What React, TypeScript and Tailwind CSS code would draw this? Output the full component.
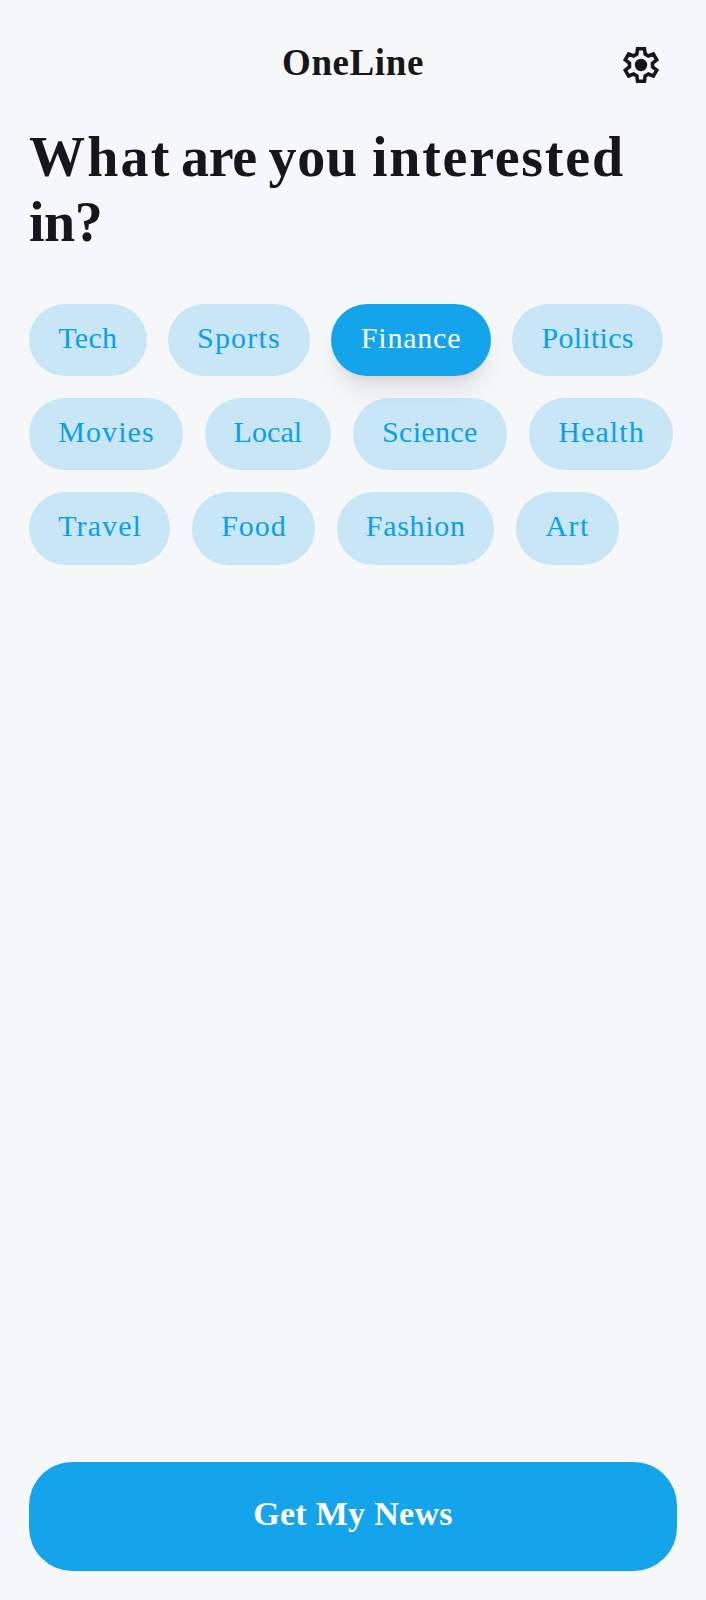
const topics = [
  [
    { name: "Tech", box: "w-[117.6px] tracking-[0.3px]" },
    { name: "Sports", box: "w-[141.4px] tracking-[1.2px]" },
    { name: "Finance", box: "w-[159.4px] tracking-[0.8px]", selected: true },
    { name: "Politics", box: "w-[150.4px] tracking-[0.3px]" },
  ],
  [
    { name: "Movies", box: "w-[154px] tracking-[1.05px] pl-px" },
    { name: "Local", box: "w-[126.4px] tracking-[0.1px]" },
    { name: "Science", box: "w-[154.1px] tracking-[0.3px]" },
    { name: "Health", box: "w-[144.9px] tracking-[1.1px] pl-px" },
  ],
  [
    { name: "Travel", box: "w-[141.2px] tracking-[1.1px] pl-px" },
    { name: "Food", box: "w-[123.1px] tracking-[0.9px] pl-px" },
    { name: "Fashion", box: "w-[157.2px] tracking-[0.7px] pl-px" },
    { name: "Art", box: "w-[103.2px] tracking-[1.5px] pl-px" },
  ],
];

// One tooth of the gear, repeated every 60 degrees.
const tooth = [
  [-4.2, -10.9],
  [-3.4, -16.2],
  [3.4, -16.2],
  [4.2, -10.9],
];

const gear = Array.from({ length: 6 }, (_, i) => {
  const a = (i * Math.PI) / 3;
  return tooth
    .map(([x, y]) => `${(x * Math.cos(a) - y * Math.sin(a)).toFixed(2)},${(x * Math.sin(a) + y * Math.cos(a)).toFixed(2)}`)
    .join(" ");
}).join(" ");

function GearIcon() {
  return (
    <svg viewBox="-20 -20 40 40" className="size-10" aria-hidden="true">
      <polygon points={gear} fill="none" stroke="currentColor" strokeWidth="3.6" strokeLinejoin="miter" />
      <circle r="6.2" fill="currentColor" />
    </svg>
  );
}

export default function App() {
  return (
    <main className="flex h-[1600px] w-full flex-col bg-[#f6f7f8] px-[29px] font-['Liberation_Serif',serif] text-[#171719]">
      <header className="grid h-[125px] grid-cols-[1fr_auto_1fr] items-center">
        <span />
        <h2 className="text-[37px] leading-none font-bold tracking-[0.6px]">OneLine</h2>
        <button aria-label="Settings" className="mt-[5px] mr-[16px] justify-self-end">
          <GearIcon />
        </button>
      </header>

      <h1 className="text-[56px] leading-[65px] font-bold whitespace-nowrap">
        <span className="mr-[-4.5px] tracking-[2.2px]">What</span>{" "}
        <span className="mr-[-2.4px] tracking-[-0.3px]">are</span>{" "}
        <span className="tracking-[0.75px]">you</span>{" "}
        <span className="tracking-[1.75px]">interested</span>
        <br />
        <span className="tracking-[-0.5px]">in?</span>
      </h1>

      <div className="mt-[49px] flex flex-col gap-[21.7px]">
        {topics.map((row, i) => (
          <div key={i} className="flex gap-[21.7px]">
            {row.map((t) => (
              <button
                key={t.name}
                className={`flex h-[72.4px] shrink-0 items-center justify-center rounded-full pb-[4.4px] text-[30px] leading-none ${t.box} ${
                  t.selected
                    ? "bg-[#14a4ec] text-white shadow-[0_18px_27px_-5.4px_rgba(0,0,0,0.1),0_7.2px_11px_-7.2px_rgba(0,0,0,0.1)]"
                    : "bg-[#14a4ec]/20 text-[#08a0ec]"
                }`}
              >
                {t.name}
              </button>
            ))}
          </div>
        ))}
      </div>

      <button className="mt-auto mb-[29.3px] flex h-[108.4px] w-full shrink-0 items-center justify-center rounded-[43.5px] bg-[#14a4ec] pb-[6px] text-[34px] leading-none font-bold tracking-[0.3px] text-white">
        Get My News
      </button>
    </main>
  );
}
